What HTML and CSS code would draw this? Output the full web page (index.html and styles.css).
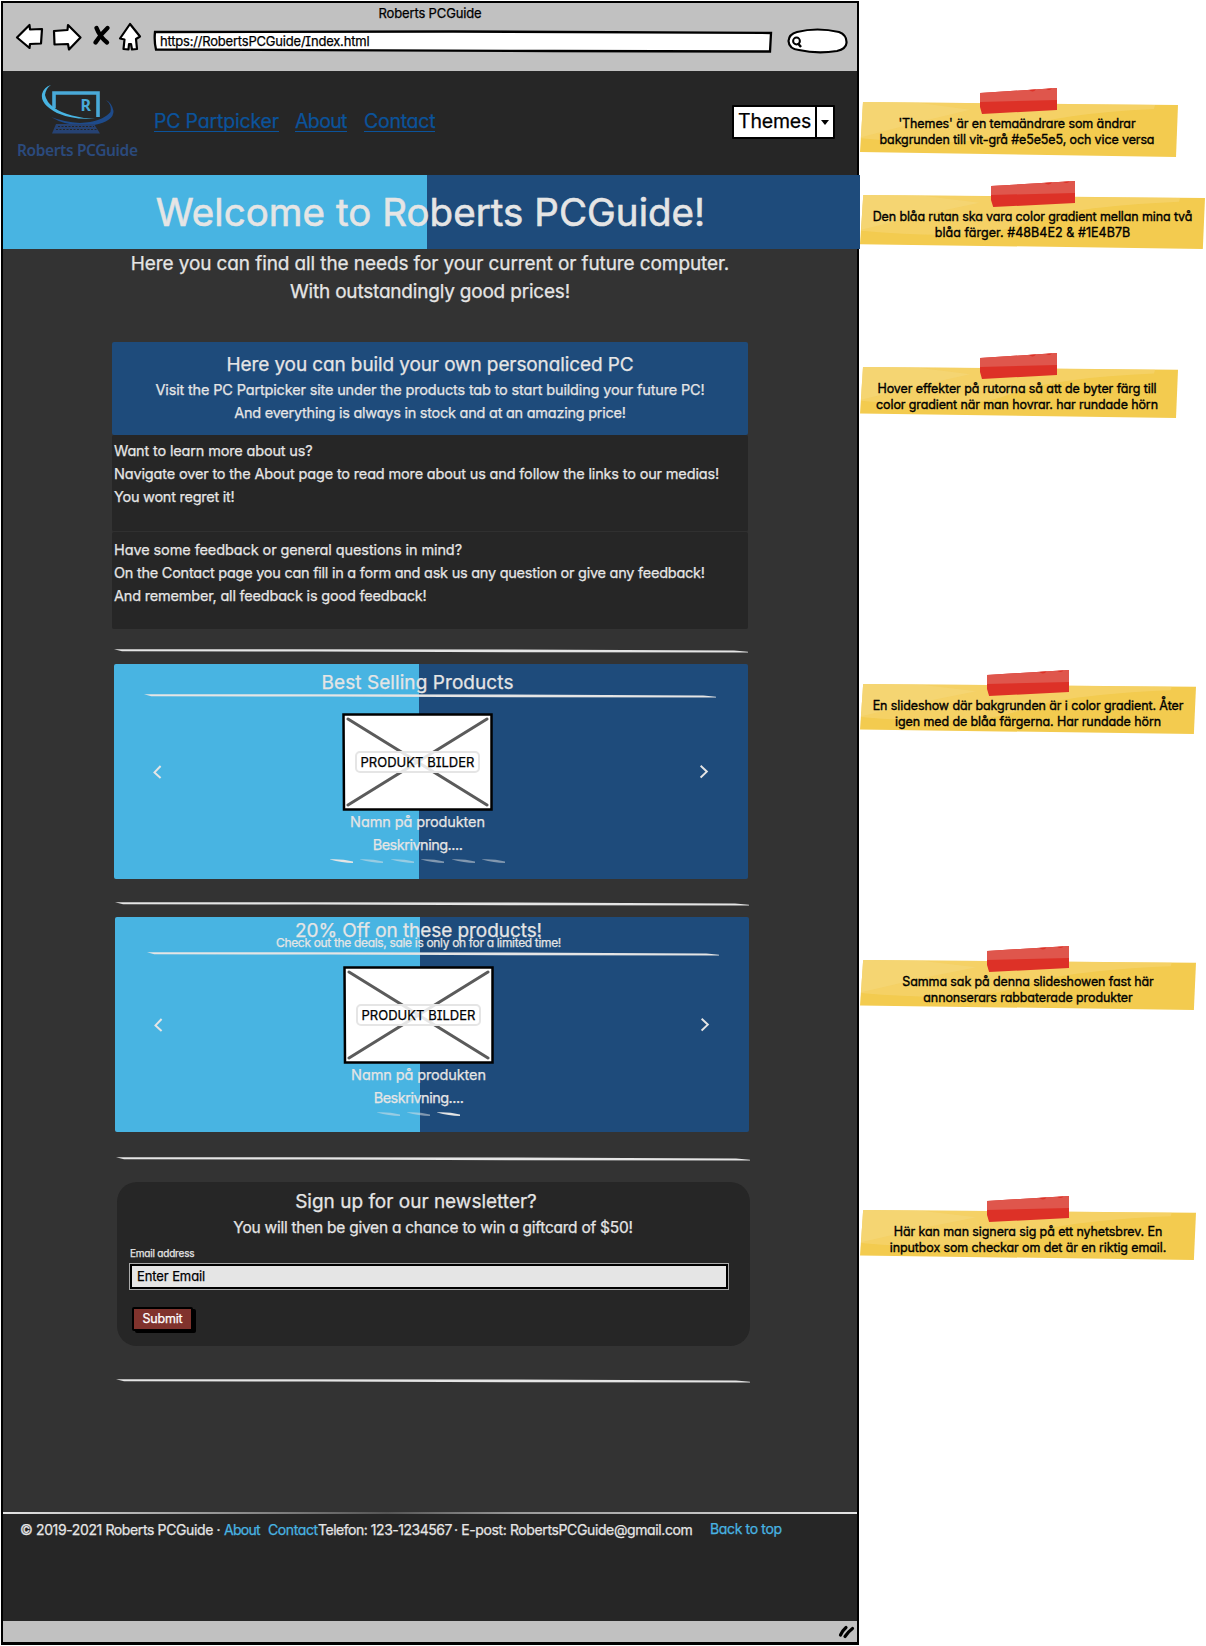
FILE: index.html
```html
<!DOCTYPE html>
<html lang="sv">
<head>
<meta charset="utf-8">
<title>Roberts PCGuide</title>
<link rel="stylesheet" href="styles.css">
</head>
<body>
<svg class="defs" width="0" height="0" aria-hidden="true">
  <symbol id="rule" viewBox="0 0 634 4" preserveAspectRatio="none"><path d="M0 .2 160 .2 400 .6 620 1.500 634 2.800 634 3.500 400 3.200 200 2.600 8 2.200Z" fill="#e5e5e5"/></symbol>
  <symbol id="dash" viewBox="0 0 23 4"><path d="M0 .3Q12-.3 23 2.600V4Q12 4 0 .6Z" fill="#e5e5e5"/></symbol>
  <symbol id="prev" viewBox="0 0 9 14"><path d="M7.6 1 1.500 7.4 7.6 13" fill="none" stroke="#e5e5e5" stroke-width="2"/></symbol>
  <symbol id="next" viewBox="0 0 9 14"><path d="M.6 .8 6.800 6.6 .6 12.6" fill="none" stroke="#e5e5e5" stroke-width="2"/></symbol>
  <symbol id="paper" viewBox="0 0 318 56" preserveAspectRatio="none">
    <path d="M3 0 318 3 316 56 0 51Z" fill="#f3cb4f"/>
    <path d="M3 0 295 3 294 7Q190 12 150 30T1 37Z" fill="#f5d778" opacity=".55"/>
    <path d="M3 0 60 1 110 8 60 20 1 36Z" fill="#f6da80" opacity=".5"/>
  </symbol>
  <symbol id="tape" viewBox="0 0 77 26" preserveAspectRatio="none">
    <path d="M0 5 77 0V22L2 26 0 19Z" fill="#dd3127"/>
    <path d="M0 5 77 0V12L0 14Z" fill="#df564c"/>
    <path d="M49 2Q53 5 56 1.500ZM66 1Q70 3 72 .5Z" fill="#dd3127"/>
  </symbol>
  <symbol id="picture" viewBox="0 0 151 98">
    <path d="M1.500 1.500H149.500V96.500H2Z" fill="#fff" stroke="#000" stroke-width="2.500"/>
    <path d="M6 6 145 92M6 92 145 6" stroke="#5b5b5b" stroke-width="3" stroke-linecap="round"/>
  </symbol>
</svg>

<div class="board">
  <main class="window">
    <header class="chrome">
      <div class="chrome-title">Roberts PCGuide</div>
      <div class="chrome-bar">
        <svg class="chrome-icons" width="128" height="30" viewBox="0 0 128 30">
          <g fill="#fff" stroke="#000" stroke-width="2.200" stroke-linejoin="round">
            <path d="M2 15.500 14.500 3 15 7.500 27 7 26 21.500 15 22 14.500 26Z"/>
            <path d="M39 9 52.500 8 53 3 65.500 15.500 54 27.500 53 22 39.500 22.500Z"/>
            <path d="M115 2 125 14.500 121 17 122 27 117 27.500 116 22 114 22 113.500 27.500 108.500 27 109.500 17.500 105 16.500Z"/>
          </g>
          <path d="M81.500 6Q85 15 92 20.500M92.500 6Q86 12 80.500 20.500" fill="none" stroke="#000" stroke-width="4.400" stroke-linecap="round"/>
        </svg>
        <div class="url">
          <svg class="fill" viewBox="0 0 620 23" preserveAspectRatio="none"><path d="M2 2 300 1.500 618 3 617 21.500 400 21 3 19.500Q1 11 2 2Z" fill="#fff" stroke="#000" stroke-width="2.300"/></svg>
          <span>https://RobertsPCGuide/Index.html</span>
        </div>
        <svg class="search" width="61" height="26" viewBox="0 0 61 26">
          <path d="M10 4Q30-1 52 4 60 7 59.500 15 59 21 50 23 30 26 12 22 2 21 1.500 13 2 6 10 4Z" fill="#fff" stroke="#000" stroke-width="2.200"/>
          <circle cx="9.500" cy="13" r="3.400" fill="none" stroke="#000" stroke-width="2"/><path d="M11 15.500 14 19" stroke="#000" stroke-width="2.500"/>
        </svg>
      </div>
    </header>

    <div class="topnav">
      <svg class="logo" width="124" height="80" viewBox="0 0 124 80">
        <path d="M40 23V8H84V32" fill="none" stroke="#49a9d8" stroke-width="3.600"/>
        <path d="M37 0Q32 3 31 10 34 24 58 30.500 70 34 84 33 62 36 43 28 26 19 28 9 30 2 37 0Z" fill="#48b4e2"/>
        <path d="M92 15Q98 20 96.500 27 88 37 66 38 50 37 37 32 55 43 80 40 100 36 99.500 26 98 18 92 15Z" fill="#1e4b8b"/>
        <path d="M42 39H80L86 48.500H38Z" fill="#264273"/>
        <path d="M44 41.500H80M42 44.500H83" stroke="#262626" stroke-dasharray="2 1.500"/>
        <text x="66.500" y="26" class="logo-r">R</text>
        <text x="3" y="71" class="logo-name" textLength="121">Roberts PCGuide</text>
      </svg>
      <nav class="links"><a class="l1">PC Partpicker</a><a class="l2">About</a><a class="l3">Contact</a></nav>
      <div class="themes"><span>Themes</span><i></i></div>
    </div>

    <h1 class="banner">Welcome to Roberts PCGuide!</h1>

    <section class="hero"><p>Here you can find all the needs for your current or future computer.</p><p class="snug">With outstandingly good prices!</p></section>

    <section class="cards">
      <div class="card blue"><h2>Here you can build your own personaliced PC</h2>
        <p>Visit the PC Partpicker site under the products tab to start building your future PC!</p>
        <p class="t25">And everything is always in stock and at an amazing price!</p></div>
      <div class="card about"><p>Want to learn more about us?</p>
        <p>Navigate over to the About page to read more about us and follow the links to our medias!</p>
        <p class="t25">You wont regret it!</p></div>
      <div class="card contact"><p class="t10">Have some feedback or general questions in mind?</p>
        <p class="t25">On the Contact page you can fill in a form and ask us any question or give any feedback!</p>
        <p class="t20">And remember, all feedback is good feedback!</p></div>
    </section>

    <svg class="rule r1"><use href="#rule"/></svg>

    <section class="slides">
      <h2>Best Selling Products</h2>
      <svg class="subrule"><use href="#rule"/></svg>
      <div class="stage">
        <svg class="prev"><use href="#prev"/></svg>
        <figure>
          <div class="picture"><svg class="fill"><use href="#picture"/></svg><span>PRODUKT BILDER</span></div>
          <figcaption>Namn på produkten<br><span class="desc">Beskrivning....</span></figcaption>
          <div class="dashes"><svg class="on"><use href="#dash"/></svg><svg><use href="#dash"/></svg><svg><use href="#dash"/></svg><svg><use href="#dash"/></svg><svg><use href="#dash"/></svg><svg><use href="#dash"/></svg></div>
        </figure>
        <svg class="next"><use href="#next"/></svg>
      </div>
    </section>

    <svg class="rule r2"><use href="#rule"/></svg>

    <section class="slides sale">
      <h2>20% Off on these products!</h2>
      <p class="sub">Check out the deals, sale is only on for a limited time!</p>
      <svg class="subrule"><use href="#rule"/></svg>
      <div class="stage">
        <svg class="prev"><use href="#prev"/></svg>
        <figure>
          <div class="picture"><svg class="fill"><use href="#picture"/></svg><span>PRODUKT BILDER</span></div>
          <figcaption>Namn på produkten<br><span class="desc">Beskrivning....</span></figcaption>
          <div class="dashes"><svg><use href="#dash"/></svg><svg><use href="#dash"/></svg><svg class="on"><use href="#dash"/></svg></div>
        </figure>
        <svg class="next"><use href="#next"/></svg>
      </div>
    </section>

    <svg class="rule r3"><use href="#rule"/></svg>

    <section class="news">
      <h2>Sign up for our newsletter?</h2>
      <p>You will then be given a chance to win a giftcard of $50!</p>
      <label>Email address</label>
      <div class="field">Enter Email</div>
      <button>Submit</button>
    </section>

    <svg class="rule r4"><use href="#rule"/></svg>

    <footer class="foot">
      <span class="copy">© 2019-2021 Roberts PCGuide ·</span><a class="fa">About</a><a class="fc">Contact</a><span class="tel">Telefon: 123-1234567</span><span class="mail">· E-post: RobertsPCGuide@gmail.com</span><a class="top">Back to top</a>
    </footer>
    <div class="status"><svg width="17" height="14" viewBox="0 0 17 14"><path d="M2.500 10Q5 5 8 2.500M7 11.500Q11 6 14.500 3.500" fill="none" stroke="#000" stroke-width="3.200" stroke-linecap="round"/></svg></div>
  </main>

  <aside class="notes">
    <div class="note n1"><svg class="fill"><use href="#paper"/></svg><svg class="tape"><use href="#tape"/></svg>
      <p>'Themes' är en temaändrare som ändrar</p><p class="t12">bakgrunden till vit-grå #e5e5e5, och vice versa</p></div>
    <div class="note n2"><svg class="fill"><use href="#paper"/></svg><svg class="tape"><use href="#tape"/></svg>
      <p class="t12">Den blåa rutan ska vara color gradient mellan mina två</p><p class="wide">blåa färger. #48B4E2 &amp; #1E4B7B</p></div>
    <div class="note n3"><svg class="fill"><use href="#paper"/></svg><svg class="tape"><use href="#tape"/></svg>
      <p>Hover effekter på rutorna så att de byter färg till</p><p class="t12">color gradient när man hovrar. har rundade hörn</p></div>
    <div class="note n4"><svg class="fill"><use href="#paper"/></svg><svg class="tape"><use href="#tape"/></svg>
      <p>En slideshow där bakgrunden är i color gradient. Åter</p><p>igen med de blåa färgerna. Har rundade hörn</p></div>
    <div class="note n5"><svg class="fill"><use href="#paper"/></svg><svg class="tape"><use href="#tape"/></svg>
      <p class="t12">Samma sak på denna slideshowen fast här</p><p>annonserars rabbaterade produkter</p></div>
    <div class="note n6"><svg class="fill"><use href="#paper"/></svg><svg class="tape"><use href="#tape"/></svg>
      <p>Här kan man signera sig på ett nyhetsbrev. En</p><p class="t12">inputbox som checkar om det är en riktig email.</p></div>
  </aside>
</div>
</body>
</html>
```
FILE: styles.css
```css
* { box-sizing: border-box; margin: 0; padding: 0; }
body { background: #fff; font-family: Inter, "Open Sans", sans-serif; font-feature-settings: "cv11", "cv08"; -webkit-text-stroke: .25px; }
svg { display: block; flex: none; }
.defs { position: absolute; }
h1, h2 { font-weight: 400; }
p, span, a, label, button, h1, h2 { white-space: nowrap; }
.fill { position: absolute; inset: 0; width: 100%; height: 100%; }

.board { display: flex; width: 1206px; height: 1646px; }
.window { display: flex; flex-direction: column; width: 858px; height: 1644px; margin: 1px 0 0 1px; border: 2px solid #000; border-bottom-width: 3px; background: #333; color: #e5e5e5; flex: none; }

/* Browser chrome */
.chrome { height: 68px; background: #c1c1c1; color: #000; flex: none; }
.chrome-title { height: 20px; line-height: 21px; text-align: center; font-size: 13px; letter-spacing: -.14px; }
.chrome-bar { display: flex; padding-left: 12px; }
.chrome-icons { margin-top: -1px; }
.url { position: relative; width: 620px; height: 23px; margin: 7px 0 0 10px; padding-left: 7px; line-height: 22px; font-size: 13px; letter-spacing: -.2px; }
.url span { position: relative; }
.search { margin: 5px 0 0 14px; }

/* Site header */
.topnav { display: flex; height: 104px; background: #262626; flex: none; }
.logo { margin: 14px 0 0 11px; }
.logo-r { font: 700 16px "Noto Sans", sans-serif; fill: #49a9d8; }
.logo-name { font: 600 15.500px "Noto Sans", sans-serif; fill: #2b4a7d; }
.links { display: flex; margin: 36px 0 0 16px; height: 26px; color: #0b539b; font-size: 19.500px; line-height: 28px; }
.links a { border-bottom: 1.500px solid #0b539b; height: 25px; }
.l1 { width: 125px; letter-spacing: -.19px; }
.l2 { width: 52px; margin-left: 16px; letter-spacing: -.63px; }
.l3 { width: 71px; margin-left: 17px; letter-spacing: -.26px; }
.themes { display: flex; width: 103px; height: 34px; margin: 34px 22px 0 auto; border: 2px solid #000; background: #fff; color: #000; font-size: 19.500px; letter-spacing: -.2px; line-height: 28px; border-radius: 1px; }
.themes span { width: 83px; padding-left: 4px; border-right: 2px solid #000; }
.themes i { width: 8px; height: 5px; margin: 13px 0 0 4px; background: #000; clip-path: polygon(0 0, 100% 0, 50% 100%); }

.banner { height: 74px; margin-right: -3px; padding-right: 2px; line-height: 75px; text-align: center; font-size: 38.500px; letter-spacing: .04px; background: linear-gradient(90deg, #48b4e2 424.500px, #1e4b7b 424.500px); -webkit-text-stroke: .6px; flex: none; }
.hero { height: 93px; padding-top: 1px; text-align: center; font-size: 19px; line-height: 28px; letter-spacing: -.1px; flex: none; }
.hero .snug { letter-spacing: -.2px; }
h2 { font-size: 19px; line-height: 28px; letter-spacing: -.11px; text-align: center; }

/* Info cards */
.cards { width: 636px; margin-left: 109px; font-size: 14.500px; line-height: 23px; letter-spacing: -.16px; }
.card { padding: 5px 2px 0; background: #262626; border-radius: 2px; }
.card.blue { height: 93px; padding-top: 9px; background: #1e4b7b; text-align: center; }
.card.blue h2 { margin-bottom: -1px; }
.card.about { height: 97px; padding-top: 4px; border-bottom: 1px solid #303030; }
.card.contact { height: 97px; padding-top: 6px; }
.t10 { letter-spacing: -.1px; }
.t20 { letter-spacing: -.2px; }
.t25 { letter-spacing: -.25px; }

.rule { width: 634px; height: 4px; }
.r1 { margin: 20px 0 0 111px; }
.r2 { margin: 23px 0 0 112px; }
.r3 { margin: 25px 0 0 113px; }
.r4 { margin: 33px 0 0 113px; }

/* Slideshows */
.slides { width: 634px; height: 215px; margin: 11px 0 0 111px; padding-top: 5px; border-radius: 2px; background: linear-gradient(90deg, #48b4e2 305.500px, #1e4b7b 305.500px); flex: none; }
.slides h2 { padding-right: 27px; letter-spacing: .07px; }
.subrule { width: 572px; height: 4px; margin: -3px 0 0 30px; }
.stage { display: flex; margin-top: 15px; padding-left: 39px; }
.prev, .next { width: 9px; height: 14px; margin-top: 52px; }
.stage figure { width: 151px; margin: 0 207px 0 180px; }
.picture { position: relative; display: flex; align-items: center; justify-content: center; width: 151px; height: 98px; }
.picture span { position: relative; width: 125px; height: 22px; border: 2px solid #e5e5e5; border-radius: 5px; background: rgba(255, 255, 255, .85); color: #000; font-size: 13px; line-height: 18px; letter-spacing: .03px; text-align: center; }
figcaption { margin-top: -1px; text-align: center; font-size: 14.500px; line-height: 23px; letter-spacing: -.12px; }
.desc { letter-spacing: -.5px; }
.dashes { display: flex; justify-content: center; gap: 7.400px; margin: 3px -20px 0; }
.dashes svg { width: 23px; height: 4px; opacity: .5; }
.dashes .on { opacity: 1; }
.sale { margin-left: 112px; padding-top: 0; }
.sale h2 { margin-top: 0; letter-spacing: -.07px; }
.sale .sub { margin-top: -9px; padding-right: 27px; text-align: center; font-size: 12px; line-height: 14px; letter-spacing: -.33px; }
.sale .subrule { margin: 2px 0 0 32px; }
.sale .stage { margin-top: 10px; }

/* Newsletter */
.news { width: 633px; height: 164px; margin: 21px 0 0 114px; padding: 6px 0 0 13px; border-radius: 20px; background: #262626; flex: none; }
.news h2 { margin-right: 48px; letter-spacing: 0; }
.news p { padding-right: 14px; text-align: center; font-size: 15.500px; line-height: 24px; letter-spacing: -.25px; }
.news label { display: block; margin-top: 6px; font-size: 10px; line-height: 14px; letter-spacing: -.2px; }
.field { width: 598px; height: 25px; margin-top: 4px; padding-left: 5px; border: 2px solid #000; outline: 1px solid #aaa; outline-offset: -.5px; background: #e5e5e5; color: #000; font-size: 13px; line-height: 20px; letter-spacing: -.1px; }
.news button { display: block; width: 61px; height: 24px; margin: 18px 0 0 2px; border: 2px solid #000; border-radius: 2px; box-shadow: 3px 2px 0 #000; background: #80332d; color: #fff; font: 12.500px/20px Inter, sans-serif; letter-spacing: -.2px; text-align: center; }

/* Footer */
.foot { display: flex; height: 109px; margin-top: auto; padding: 5px 0 0 17px; border-top: 2px solid; border-image: linear-gradient(90deg, #e5e5e5, #777 35%, #555 45%, #999 60%, #e5e5e5) 1; background: #262626; font-size: 14px; line-height: 22px; letter-spacing: -.38px; flex: none; }
.foot a { color: #48b4e2; }
.copy { width: 204px; }
.fa { width: 44px; letter-spacing: -.7px; }
.fc { width: 50px; letter-spacing: -.4px; }
.tel { width: 136px; letter-spacing: -.47px; }
.mail { width: 256px; }
.top { margin-top: -1px; letter-spacing: -.35px; }
.status { display: flex; justify-content: flex-end; height: 21px; padding: 4px 2px 0 0; background: #c1c1c1; flex: none; }

/* Sticky notes */
.notes { width: 346px; margin-left: 1px; color: #000; -webkit-text-stroke: .35px; }
.note { position: relative; width: 318px; height: 55px; padding: 14px 4px 0 0; text-align: center; font-size: 12.500px; line-height: 16px; letter-spacing: -.1px; }
.note p { position: relative; }
.tape { position: absolute; left: 120px; top: -14px; width: 77px; height: 26px; }
.n1 { margin-top: 102px; }
.n2 { width: 345px; height: 54px; margin-top: 38px; padding-right: 0; }
.n2 .tape { left: 131px; width: 84px; }
.n3 { height: 51px; margin-top: 118px; }
.n4 { width: 336px; height: 50px; margin-top: 266px; }
.n5 { width: 336px; height: 50px; margin-top: 226px; }
.n6 { width: 336px; height: 50px; margin-top: 200px; }
.n4, .n5, .n6 { padding: 14px 0 0; }
.n4 .tape, .n5 .tape, .n6 .tape { left: 127px; width: 82px; }
.note .t12 { letter-spacing: -.12px; }
.note .wide { letter-spacing: .05px; }
```
